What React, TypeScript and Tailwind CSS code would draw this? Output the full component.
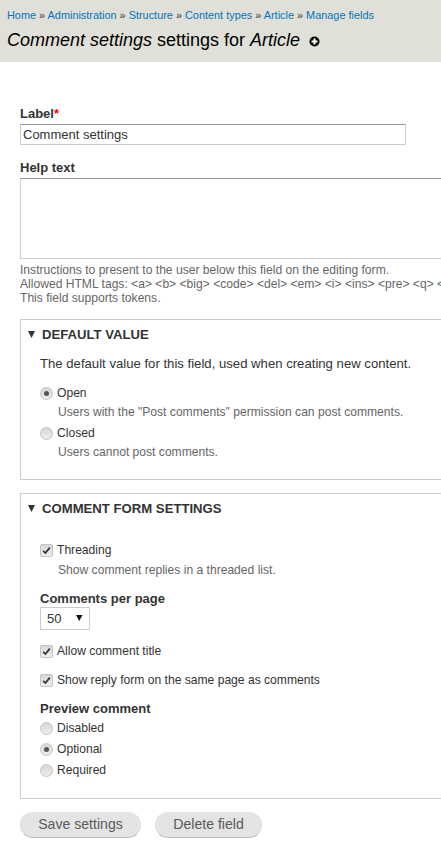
const font = { fontFamily: '"Liberation Sans", Arial, sans-serif' };

function Radio({ checked }: { checked?: boolean }) {
  return (
    <span className="w-[13px] h-[13px] rounded-full border border-[#c4c4c4] bg-gradient-to-b from-[#d6d6d6] to-[#eeeeee] flex items-center justify-center shrink-0">
      {checked && <span className="w-[5px] h-[5px] rounded-full bg-[#555]" />}
    </span>
  );
}

function Check() {
  return (
    <span className="w-[13px] h-[13px] rounded-[2px] border border-[#c4c4c4] bg-gradient-to-b from-[#d6d6d6] to-[#eeeeee] flex items-center justify-center shrink-0">
      <svg width="9" height="9" viewBox="0 0 9 9">
        <path d="M1.2 4.8 L3.4 7 L7.8 1.6" fill="none" stroke="#333" strokeWidth="1.7" />
      </svg>
    </span>
  );
}

function Option({ type, checked, label, className }: { type: 'radio' | 'check'; checked?: boolean; label: string; className?: string }) {
  return (
    <div className={`flex items-center h-[15px] text-[12.1px] text-[#333] ${className ?? ''}`}>
      {type === 'radio' ? <Radio checked={checked} /> : <Check />}
      <span className="ml-[4px]">{label}</span>
    </div>
  );
}

function Legend({ title }: { title: string }) {
  return (
    <div className="flex items-center h-[15px] pl-[7px] text-[13.15px] font-bold text-[#333]">
      <svg width="8" height="7" viewBox="0 0 8 7" className="mr-[6px]">
        <path d="M0 0 H7 L3.5 7 Z" fill="#333" />
      </svg>
      <span className="uppercase">{title}</span>
    </div>
  );
}

export default function App() {
  return (
    <div className="w-[441px] h-[850px] overflow-hidden bg-white text-[#333]" style={font}>
      {/* Header */}
      <div className="h-[62px] bg-[#e0e0d8] px-[7px] pt-[8px]">
        <div className="text-[10.9px] leading-[15px] text-[#333]">
          {['Home', 'Administration', 'Structure', 'Content types', 'Article', 'Manage fields'].map((c, i) => (
            <span key={c}>
              {i > 0 && ' » '}
              <a className="text-[#0074bd]">{c}</a>
            </span>
          ))}
        </div>
        <h1 className="mt-[4px] flex items-center text-[18px] leading-[26px] font-normal text-black">
          <span><em>Comment settings</em> settings for <em>Article</em></span>
          <svg width="11" height="11" viewBox="0 0 11 11" className="ml-[9px] mt-[3px]">
            <circle cx="5.5" cy="5.5" r="5" fill="#000" />
            <path d="M5.5 2.5 V8.5 M2.5 5.5 H8.5" stroke="#fff" strokeWidth="2" />
          </svg>
        </h1>
      </div>

      <div className="pl-[20px] w-[520px]">
        {/* Label */}
        <label className="block mt-[44px] text-[13px] leading-[16px] font-bold">
          Label<span className="text-[#ff0000]">*</span>
        </label>
        <input readOnly value="Comment settings" className="block mt-[2px] w-[386px] h-[21px] px-[2px] border border-[#ccc] border-t-[#999] text-[13px] text-[#333] outline-none" />

        {/* Help text */}
        <label className="block mt-[15px] text-[13px] leading-[16px] font-bold">Help text</label>
        <textarea readOnly className="block w-full mt-[2px] h-[81px] border border-[#ccc] border-t-[#999] outline-none resize-none" />
        <div className="mt-[4px] text-[12.1px] leading-[14px] text-[#666] whitespace-nowrap">
          <div>Instructions to present to the user below this field on the editing form.</div>
          <div>{'Allowed HTML tags: <a> <b> <big> <code> <del> <em> <i> <ins> <pre> <q> <small> <span> <strong>'}</div>
          <div>This field supports tokens.</div>
        </div>

        {/* Default value */}
        <div className="mt-[14px] h-[161px] border border-[#ccc] pt-[7px]">
          <Legend title="Default value" />
          <div className="pl-[19px]">
            <p className="mt-[14px] text-[13.15px] leading-[16px]">The default value for this field, used when creating new content.</p>
            <Option type="radio" checked label="Open" className="mt-[14px]" />
            <p className="mt-[4px] ml-[18px] text-[12.1px] leading-[14px] text-[#666]">Users with the "Post comments" permission can post comments.</p>
            <Option type="radio" label="Closed" className="mt-[7px]" />
            <p className="mt-[4px] ml-[18px] text-[12.1px] leading-[14px] text-[#666]">Users cannot post comments.</p>
          </div>
        </div>

        {/* Comment form settings */}
        <div className="mt-[13px] h-[306px] border border-[#ccc] pt-[7px]">
          <Legend title="Comment form settings" />
          <div className="pl-[19px]">
            <Option type="check" label="Threading" className="mt-[27px]" />
            <p className="mt-[5px] ml-[18px] text-[12.1px] leading-[14px] text-[#666]">Show comment replies in a threaded list.</p>
            <label className="block mt-[14px] text-[13px] leading-[16px] font-bold">Comments per page</label>
            <div className="w-[50px] h-[23px] border border-[#ccc] flex items-center justify-between pl-[6px] pr-[6px] text-[13px]">
              <span>50</span>
              <svg width="7" height="6" viewBox="0 0 7 6" className="mb-[2px]">
                <path d="M0 0 H6.5 L3.25 6 Z" fill="#111" />
              </svg>
            </div>
            <Option type="check" label="Allow comment title" className="mt-[14px]" />
            <Option type="check" label="Show reply form on the same page as comments" className="mt-[14px]" />
            <label className="block mt-[13px] text-[13px] leading-[16px] font-bold">Preview comment</label>
            <Option type="radio" label="Disabled" className="mt-[4px]" />
            <Option type="radio" checked label="Optional" className="mt-[6px]" />
            <Option type="radio" label="Required" className="mt-[6px]" />
          </div>
        </div>

        {/* Buttons */}
        <div className="mt-[13px] flex gap-[14px]">
          <button className="w-[121px] h-[26px] rounded-[13px] bg-[#e4e4e4] border-b border-b-[#bbb] border-x border-x-[#ddd] text-[14.1px] text-[#5a5a5a]">Save settings</button>
          <button className="w-[107px] h-[26px] rounded-[13px] bg-[#e4e4e4] border-b border-b-[#bbb] border-x border-x-[#ddd] text-[14.1px] text-[#5a5a5a]">Delete field</button>
        </div>
      </div>
    </div>
  );
}
